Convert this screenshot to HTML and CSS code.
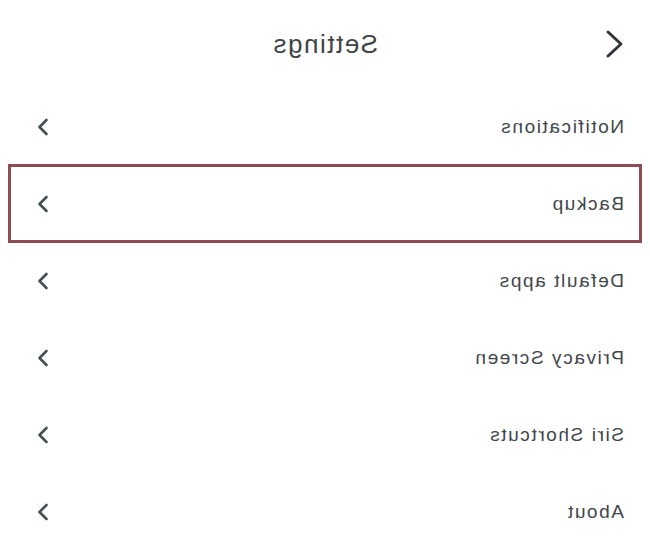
FILE: index.html
```html
<!DOCTYPE html>
<html lang="en">
<head>
<meta charset="utf-8">
<title>Settings</title>
<link rel="stylesheet" href="styles.css">
</head>
<body>
<div class="page">
  <header class="header">
    <div class="back">
      <svg width="22" height="30" viewBox="0 0 22 30"><path d="M18 3 L5 15 L18 27" fill="none" stroke="#30373a" stroke-width="3" stroke-linecap="round" stroke-linejoin="round"/></svg>
    </div>
    <h1 class="title">Settings</h1>
    <div class="spacer"></div>
  </header>
  <ul class="list">
    <li class="row"><span class="label">Notifications</span><svg class="chev" width="12" height="18" viewBox="0 0 12 18"><path d="M2.5 2 L9.5 9 L2.5 16" fill="none" stroke="#465054" stroke-width="2.6" stroke-linecap="round" stroke-linejoin="round"/></svg></li>
    <li class="row row-selected"><span class="label">Backup</span><svg class="chev" width="12" height="18" viewBox="0 0 12 18"><path d="M2.5 2 L9.5 9 L2.5 16" fill="none" stroke="#465054" stroke-width="2.6" stroke-linecap="round" stroke-linejoin="round"/></svg></li>
    <li class="row"><span class="label">Default apps</span><svg class="chev" width="12" height="18" viewBox="0 0 12 18"><path d="M2.5 2 L9.5 9 L2.5 16" fill="none" stroke="#465054" stroke-width="2.6" stroke-linecap="round" stroke-linejoin="round"/></svg></li>
    <li class="row"><span class="label">Privacy Screen</span><svg class="chev" width="12" height="18" viewBox="0 0 12 18"><path d="M2.5 2 L9.5 9 L2.5 16" fill="none" stroke="#465054" stroke-width="2.6" stroke-linecap="round" stroke-linejoin="round"/></svg></li>
    <li class="row"><span class="label">Siri Shortcuts</span><svg class="chev" width="12" height="18" viewBox="0 0 12 18"><path d="M2.5 2 L9.5 9 L2.5 16" fill="none" stroke="#465054" stroke-width="2.6" stroke-linecap="round" stroke-linejoin="round"/></svg></li>
    <li class="row"><span class="label">About</span><svg class="chev" width="12" height="18" viewBox="0 0 12 18"><path d="M2.5 2 L9.5 9 L2.5 16" fill="none" stroke="#465054" stroke-width="2.6" stroke-linecap="round" stroke-linejoin="round"/></svg></li>
  </ul>
</div>
</body>
</html>
```

FILE: styles.css
```css
html, body {
  margin: 0;
  padding: 0;
  background: #ffffff;
}
body {
  font-family: "Liberation Sans", Arial, sans-serif;
  color: #3f4447;
}
.page {
  width: 650px;
  height: 558px;
  overflow: hidden;
  transform: scaleX(-1);
}
.header {
  height: 88px;
  display: grid;
  grid-template-columns: 80px 1fr 80px;
  align-items: center;
  padding: 0 0 0 24px;
  box-sizing: border-box;
}
.back {
  display: flex;
  align-items: center;
}
.back svg { display: block; }
.title {
  margin: 0;
  text-align: center;
  font-weight: normal;
  font-size: 26px;
  letter-spacing: 1.5px;
  color: #3f4447;
  padding-right: 24px;
}
.list {
  list-style: none;
  margin: 0;
  padding: 0;
}
.row {
  height: 77px;
  display: flex;
  align-items: center;
  justify-content: space-between;
  padding: 0 37px 0 26px;
  box-sizing: border-box;
}
.row-selected {
  height: 79px;
  margin: -1px 8px;
  padding: 0 26px 0 15px;
  border: 3px solid #8e4c52;
  position: relative;
  z-index: 1;
}
.label {
  font-size: 19px;
  letter-spacing: 1.6px;
  color: #41464a;
}
.chev { display: block; }
```
